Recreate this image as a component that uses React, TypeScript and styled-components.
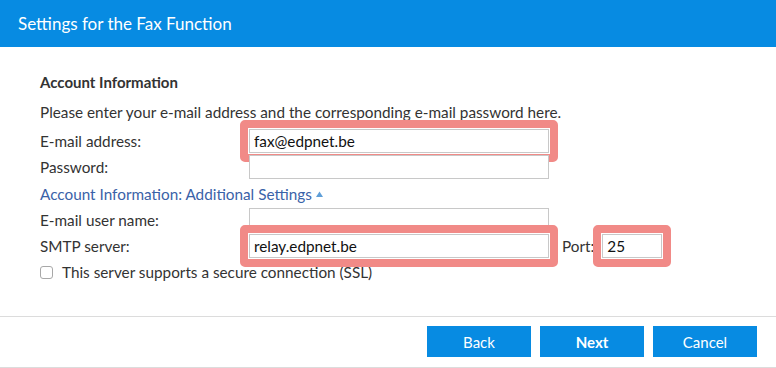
import React from 'react';
import styled, { createGlobalStyle } from 'styled-components';

const GlobalStyle = createGlobalStyle`
  html, body {
    margin: 0;
    padding: 0;
    background: #fff;
  }
  body {
    font-family: Lato, "Open Sans", sans-serif;
    color: #333;
  }
`;

const Page = styled.div`
  width: 776px;
  height: 368px;
  display: flex;
  flex-direction: column;
  overflow: hidden;
`;

const Header = styled.header`
  height: 47px;
  flex: none;
  background: #078be2;
  color: #fff;
  display: flex;
  align-items: center;
  padding-left: 18px;
  font-size: 17px;
`;

const Content = styled.main`
  flex: 1;
  padding: 25px 0 0 40px;
`;

const Heading = styled.h2`
  margin: 0;
  font-size: 15px;
  font-weight: 700;
  line-height: 20px;
  color: #333;
`;

const Intro = styled.p`
  margin: 10px 0 6px;
  font-size: 15.3px;
  line-height: 20px;
`;

const Row = styled.div<{ $h?: number }>`
  display: flex;
  align-items: center;
  height: ${(p) => p.$h ?? 26}px;
  font-size: 15.3px;
`;

const Label = styled.label`
  width: 209px;
  flex: none;
`;

const Field = styled.div<{ $marked?: boolean; $w?: number }>`
  position: relative;
  width: ${(p) => p.$w ?? 300}px;
  height: 24px;
  flex: none;

  ${(p) =>
    p.$marked &&
    `
    &::before {
      content: '';
      position: absolute;
      left: -9px;
      right: -9px;
      top: -9px;
      bottom: -9px;
      border: 8px solid #f18a87;
      border-radius: 5px;
      pointer-events: none;
    }
  `}
`;

const Input = styled.input`
  box-sizing: border-box;
  width: 100%;
  height: 100%;
  margin: 0;
  border: 1px solid #c8c8c8;
  padding: 0 4px;
  font-family: Lato, "Open Sans", sans-serif;
  font-size: 15.3px;
  color: #111;
  outline: none;
  background: #fff;
`;

const PortLabel = styled.span`
  margin: 0 8px 0 13px;
`;

const ToggleLink = styled.a`
  color: #3a62a8;
  text-decoration: none;
  display: inline-flex;
  align-items: center;
  gap: 4px;
`;

const CheckRow = styled.label`
  display: flex;
  align-items: center;
  gap: 9px;
  height: 26px;
  font-size: 15.3px;
`;

const Box = styled.span`
  width: 13px;
  height: 13px;
  box-sizing: border-box;
  border: 1px solid #a8a8a8;
  border-radius: 3px;
  background: #fff;
  flex: none;
`;

const Footer = styled.footer`
  flex: none;
  border-top: 1px solid #dcdcdc;
  border-bottom: 1px solid #dcdcdc;
  padding: 9px 19px 10px;
  display: flex;
  justify-content: flex-end;
  gap: 9px;
`;

const Button = styled.button<{ $primary?: boolean }>`
  width: 104px;
  height: 31px;
  border: none;
  border-radius: 0;
  background: #078be2;
  color: #fff;
  font-family: Lato, "Open Sans", sans-serif;
  font-size: 15px;
  font-weight: ${(p) => (p.$primary ? 700 : 400)};
  cursor: pointer;
`;

const Caret = () => (
  <svg width="7" height="6" viewBox="0 0 7 6">
    <path d="M0 6 L3.5 0.5 L7 6 Z" fill="#5f9fd8" />
  </svg>
);

export default function App() {
  return (
    <Page>
      <GlobalStyle />
      <Header>Settings for the Fax Function</Header>
      <Content>
        <Heading>Account Information</Heading>
        <Intro>Please enter your e-mail address and the corresponding e-mail password here.</Intro>
        <Row>
          <Label>E-mail address:</Label>
          <Field $marked>
            <Input defaultValue="fax@edpnet.be" />
          </Field>
        </Row>
        <Row>
          <Label>Password:</Label>
          <Field>
            <Input type="password" />
          </Field>
        </Row>
        <Row $h={27}>
          <ToggleLink href="#">
            Account Information: Additional Settings
            <Caret />
          </ToggleLink>
        </Row>
        <Row>
          <Label>E-mail user name:</Label>
          <Field>
            <Input />
          </Field>
        </Row>
        <Row>
          <Label>SMTP server:</Label>
          <Field $marked>
            <Input defaultValue="relay.edpnet.be" />
          </Field>
          <PortLabel>Port:</PortLabel>
          <Field $marked $w={60}>
            <Input defaultValue="25" />
          </Field>
        </Row>
        <CheckRow>
          <Box />
          This server supports a secure connection (SSL)
        </CheckRow>
      </Content>
      <Footer>
        <Button>Back</Button>
        <Button $primary>Next</Button>
        <Button>Cancel</Button>
      </Footer>
    </Page>
  );
}
